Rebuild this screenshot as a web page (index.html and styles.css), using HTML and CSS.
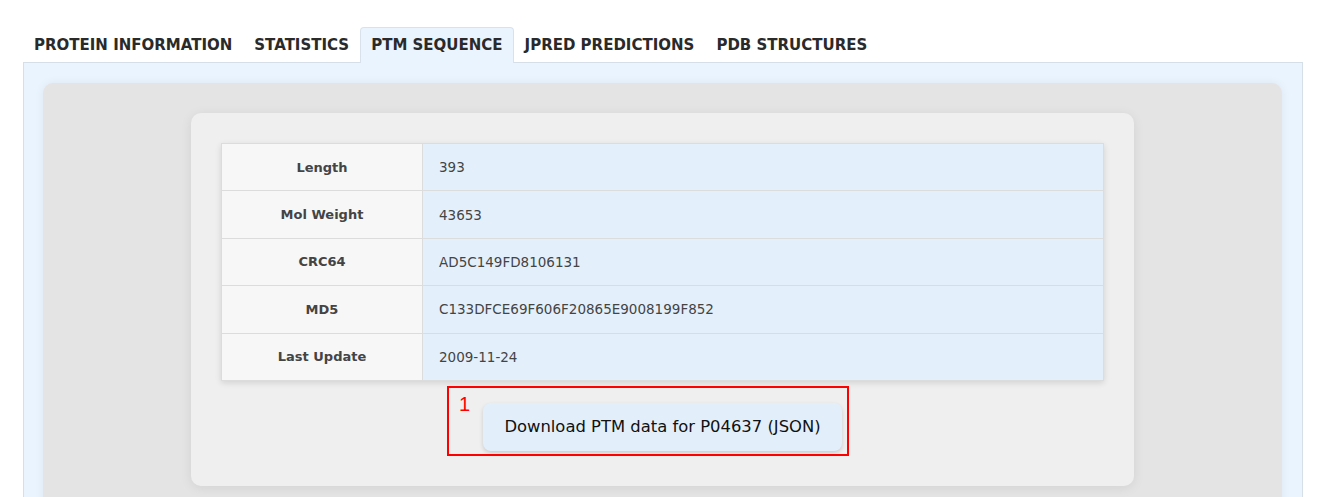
FILE: index.html
```html
<!DOCTYPE html>
<html>
<head>
<meta charset="utf-8">
<link rel="stylesheet" href="styles.css">
</head>
<body>
<div class="page">
  <nav class="tabs">
    <div class="tab">PROTEIN INFORMATION</div>
    <div class="tab">STATISTICS</div>
    <div class="tab active">PTM SEQUENCE</div>
    <div class="tab">JPRED PREDICTIONS</div>
    <div class="tab">PDB STRUCTURES</div>
  </nav>
  <div class="panel">
    <div class="gray">
      <div class="card">
        <table class="info">
          <tr><th>Length</th><td>393</td></tr>
          <tr><th>Mol Weight</th><td>43653</td></tr>
          <tr><th>CRC64</th><td>AD5C149FD8106131</td></tr>
          <tr><th>MD5</th><td>C133DFCE69F606F20865E9008199F852</td></tr>
          <tr><th>Last Update</th><td>2009-11-24</td></tr>
        </table>
        <div class="actions">
          <div class="btn-wrap">
            <button class="btn">Download PTM data for P04637 (JSON)</button>
            <div class="mark"><span class="mark-num">1</span></div>
          </div>
        </div>
      </div>
    </div>
  </div>
</div>
</body>
</html>
```
FILE: styles.css
```css
html, body {
  margin: 0;
  overflow: hidden;
  background: #fff;
}
body {
  font-family: "DejaVu Sans", "Open Sans", sans-serif;
  color: #333;
}
.page {
  padding: 27px 23px 0;
}
.tabs {
  display: flex;
  position: relative;
  z-index: 2;
}
.tab {
  height: 35px;
  line-height: 34px;
  padding: 0 10px;
  font-size: 15px;
  font-weight: 600;
  color: #2a2a2a;
  border: 1px solid transparent;
  border-bottom: none;
  border-radius: 4px 4px 0 0;
  margin-bottom: -1px;
}
.tab.active {
  background: #eaf4fe;
  border-color: #d9e2ec;
  font-weight: 700;
}
.panel {
  background: #eaf4fe;
  border: 1px solid #d6dee7;
  padding: 20px 20px 30px 19px;
}
.gray {
  background: #e4e4e4;
  border-radius: 10px;
  box-shadow: 0 0 10px rgba(0, 0, 0, 0.06);
  padding: 30px 0;
}
.card {
  width: 883px;
  margin: 0 auto;
  background: #efefef;
  border-radius: 10px;
  box-shadow: 0 2px 12px rgba(0, 0, 0, 0.08);
  padding: 30px 30px 35px;
}
.info {
  width: 100%;
  border-collapse: collapse;
  border: 1px solid #dcdcdc;
  box-shadow: 0 2px 6px rgba(0, 0, 0, 0.12);
}
.info tr {
  height: 47.4px;
}
.info th {
  width: 200px;
  background: #f7f7f7;
  border: 1px solid #dcdcdc;
  font-size: 13px;
  font-weight: 700;
  color: #444;
  text-align: center;
  padding: 0;
}
.info td {
  background: #e3f0fc;
  border: 1px solid #dcdcdc;
  font-size: 13.5px;
  color: #444;
  padding: 0 16px;
}
.actions {
  display: flex;
  justify-content: center;
  padding-top: 22px;
}
.btn-wrap {
  position: relative;
}
.btn {
  display: block;
  width: 359px;
  height: 48px;
  border: none;
  border-radius: 8px;
  background: #e2effb;
  box-shadow: 0 2px 4px rgba(0, 0, 0, 0.15);
  font-family: inherit;
  font-size: 16.4px;
  color: #111;
  padding: 0;
}
.mark {
  position: absolute;
  left: -36px;
  top: -17px;
  width: 398px;
  height: 66px;
  border: 2px solid #f00;
  pointer-events: none;
}
.mark-num {
  position: absolute;
  left: 10px;
  top: 6px;
  font-family: "Liberation Sans", sans-serif;
  font-size: 20px;
  line-height: 20px;
  color: #f00;
}
```
